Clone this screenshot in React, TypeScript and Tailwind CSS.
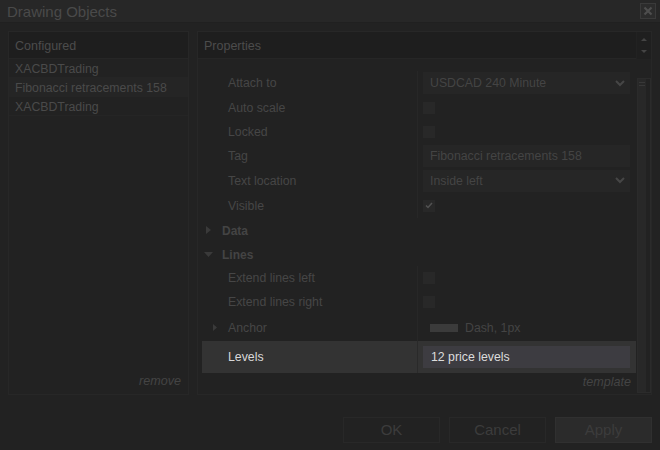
import React from 'react';

const font = "font-['Liberation_Sans',Arial,sans-serif]";

function Chevron() {
  return (
    <svg width="10" height="7" viewBox="0 0 10 7" className="shrink-0">
      <path d="M1 1 L5 5 L9 1" stroke="#464646" strokeWidth="2" fill="none" />
    </svg>
  );
}

function Checkbox({ checked }: { checked?: boolean }) {
  return (
    <div className="w-[12px] h-[12px] bg-[#282828] flex items-center justify-center">
      {checked && (
        <svg width="8" height="7" viewBox="0 0 8 7">
          <path d="M1 3.5 L3 5.5 L7 1" stroke="#525252" strokeWidth="1.5" fill="none" />
        </svg>
      )}
    </div>
  );
}

function Field({ children, select }: { children: React.ReactNode; select?: boolean }) {
  return (
    <div className="h-[22px] bg-[#262626] flex items-center justify-between pl-[7px] pr-[5px] text-[#444444]">
      <span className="pt-[1px]">{children}</span>
      {select && <Chevron />}
    </div>
  );
}

function Triangle({ open, small }: { open?: boolean; small?: boolean }) {
  if (open)
    return (
      <svg width="9" height="5" viewBox="0 0 9 5">
        <path d="M0 0 L9 0 L4.5 5 Z" fill="#3a3a3a" />
      </svg>
    );
  return small ? (
    <svg width="4" height="7" viewBox="0 0 4 7">
      <path d="M0 0 L4 3.5 L0 7 Z" fill="#3a3a3a" />
    </svg>
  ) : (
    <svg width="5" height="8" viewBox="0 0 5 8">
      <path d="M0 0 L5 4 L0 8 Z" fill="#3a3a3a" />
    </svg>
  );
}

type Prop = { label: string; h: string; value?: React.ReactNode; anchor?: boolean };

function PropRow({ label, h, value, anchor }: Prop) {
  return (
    <div className={`flex ${h}`}>
      <div className="w-[215px] flex items-center text-[#464646]">
        <div className="w-[26px] flex justify-end pr-[11px]">{anchor && <Triangle small />}</div>
        <span className="pt-[1px]">{label}</span>
      </div>
      <div className="flex-1 border-l border-[#272727] flex items-center pl-[5px] pr-[6px]">
        <div className="flex-1">{value}</div>
      </div>
    </div>
  );
}

function Category({ label, open, h }: { label: string; open?: boolean; h: string }) {
  return (
    <div className={`flex items-center ${h}`}>
      <div className={`w-[20px] flex ${open ? 'pl-[2px]' : 'pl-[4px]'}`}>
        <Triangle open={open} />
      </div>
      <span className="font-bold text-[12px] text-[#444444] pt-[1px]">{label}</span>
    </div>
  );
}

export default function App() {
  const configured = ['XACBDTrading', 'Fibonacci retracements 158', 'XACBDTrading'];

  return (
    <div className={`w-[660px] h-[450px] bg-[#222222] flex flex-col ${font} text-[12.3px] overflow-hidden`}>
      {/* Title bar */}
      <div className="h-[23px] bg-[#272727] border-b border-[#202020] flex items-center justify-between pl-[7px] pr-[4px]">
        <span className="text-[15px] text-[#4a4a4a] pt-[2px]">Drawing Objects</span>
        <div className="w-[16px] h-[16px] border border-[#3a3a3a] bg-[#2c2c2c] flex items-center justify-center">
          <svg width="10" height="10" viewBox="0 0 10 10">
            <path d="M1.5 1.5 L8.5 8.5 M8.5 1.5 L1.5 8.5" stroke="#4e4e4e" strokeWidth="2.2" />
          </svg>
        </div>
      </div>

      <div className="flex gap-[8px] px-[8px] mt-[8px] h-[364px]">
        {/* Configured */}
        <div className="w-[181px] border border-[#272727] flex flex-col">
          <div className="h-[27px] bg-[#1e1e1e] border-b border-[#262626] flex items-center pl-[6px] pt-[2px] text-[12.5px] text-[#4c4c4c]">
            Configured
          </div>
          {configured.map((c, i) => (
            <div
              key={i}
              className={`h-[19px] flex items-center pl-[6px] pt-[3px] border-b border-[#252525] text-[#4a4a4a] ${i === 1 ? 'bg-[#252525]' : ''}`}
            >
              {c}
            </div>
          ))}
          <div className="flex-1" />
          <div className="flex justify-end pr-[7px] pb-[3px] italic text-[12.6px] text-[#444444]">remove</div>
        </div>

        {/* Properties */}
        <div className="flex-1 border border-[#272727] flex flex-col">
          <div className="flex h-[27px]">
            <div className="flex-1 bg-[#1e1e1e] border-b border-[#262626] flex items-center pl-[6px] pt-[2px] text-[12.5px] text-[#4c4c4c]">
              Properties
            </div>
            <div className="w-[14px] bg-[#1f1f1f] flex flex-col items-center justify-center gap-[9px] ml-[1px]">
              <svg width="6" height="3" viewBox="0 0 6 3">
                <path d="M0 3 L3 0 L6 3 Z" fill="#444444" />
              </svg>
              <svg width="6" height="3" viewBox="0 0 6 3">
                <path d="M0 0 L6 0 L3 3 Z" fill="#444444" />
              </svg>
            </div>
          </div>

          <div className="flex flex-1">
            <div className="flex-1 pl-[4px] pt-[12px] flex flex-col">
              <PropRow label="Attach to" h="h-[24px]" value={<Field select>USDCAD 240 Minute</Field>} />
              <PropRow label="Auto scale" h="h-[25px]" value={<Checkbox />} />
              <PropRow label="Locked" h="h-[24px]" value={<Checkbox />} />
              <PropRow label="Tag" h="h-[24px]" value={<Field>Fibonacci retracements 158</Field>} />
              <PropRow label="Text location" h="h-[25px]" value={<Field select>Inside left</Field>} />
              <PropRow label="Visible" h="h-[25px]" value={<Checkbox checked />} />
              <Category label="Data" h="h-[24px]" />
              <Category label="Lines" open h="h-[24px]" />
              <PropRow label="Extend lines left" h="h-[24px]" value={<Checkbox />} />
              <PropRow label="Extend lines right" h="h-[24px]" value={<Checkbox />} />
              <PropRow
                label="Anchor"
                anchor
                h="h-[27px]"
                value={
                  <div className="flex items-center gap-[7px] pl-[7px] text-[#444444]">
                    <div className="w-[28px] h-[8px] bg-[#3b3b3b]" />
                    <span className="pt-[1px]">Dash, 1px</span>
                  </div>
                }
              />
              <div className="flex h-[32px] bg-[#333333]">
                <div className="w-[215px] flex items-center pl-[26px] pt-[1px] text-[#d8d8d8]">Levels</div>
                <div className="flex-1 border-l border-[#2a2a2a] flex items-center pl-[5px] pr-[6px]">
                  <div className="flex-1 h-[22px] bg-[#3d3c41] flex items-center pl-[8px] pt-[1px] text-[#dcdcdc]">12 price levels</div>
                </div>
              </div>
              <div className="flex justify-end pr-[5px] italic text-[12.6px] text-[#444444]">template</div>
            </div>

            {/* Scrollbar */}
            <div className="w-[14px] pt-[19px] pb-[1px] ml-[1px]">
              <div className="h-full border border-[#2b2b2b] bg-[#222] flex">
                <div className="w-[8px] bg-[#282828] flex flex-col gap-[2px] pt-[3px] px-[1px]">
                  <div className="h-[1px] bg-[#383838]" />
                  <div className="h-[1px] bg-[#383838]" />
                </div>
              </div>
            </div>
          </div>
        </div>
      </div>

      {/* Buttons */}
      <div className="flex justify-end gap-[9px] pr-[8px] mt-[22px]">
        <div className="w-[97px] h-[26px] border border-[#282828] flex items-center justify-center text-[15px] text-[#3c3c3c]">OK</div>
        <div className="w-[97px] h-[26px] border border-[#282828] flex items-center justify-center text-[15px] text-[#3c3c3c]">Cancel</div>
        <div className="w-[97px] h-[26px] border border-[#303030] bg-[#2b2b2b] flex items-center justify-center text-[15px] text-[#3c3c3c]">Apply</div>
      </div>
    </div>
  );
}
